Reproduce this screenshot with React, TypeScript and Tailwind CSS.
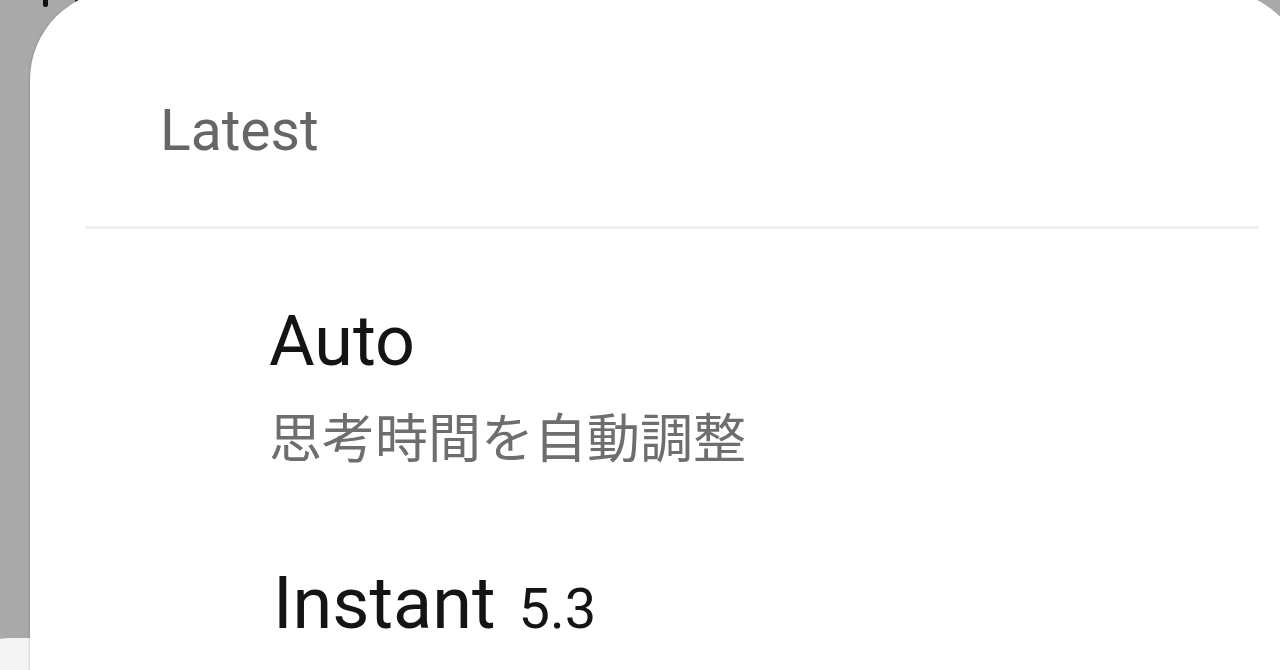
export default function App() {
  return (
    <div
      className="relative h-[670px] w-[1280px] overflow-hidden bg-[#a9a9a9]"
      style={{ fontFamily: "Roboto, 'Noto Sans CJK JP', sans-serif" }}
    >
      {/* bits of the page behind the sheet */}
      <div className="absolute left-[43px] top-[-6px] h-[13px] w-[5px] rounded-b-[2px] bg-[#111]" />
      <div className="absolute left-[75px] top-[-6px] h-[9px] w-[5px] rounded-b-[3px] bg-[#222]" />
      <div className="absolute left-[-60px] top-[638px] h-[120px] w-[120px] rounded-tl-[70px] bg-[#f4f4f4]" />

      <div className="relative -mt-[10px] ml-[30px] flex h-[720px] w-[1276px] flex-col rounded-t-[90px] bg-white shadow-[-1px_0_2px_rgba(0,0,0,0.12)]">
        <div className="pl-[130px] pt-[112px] text-[57px] leading-none text-[#666]">Latest</div>
        <div className="ml-[55px] mt-[67px] h-[3px] w-[1174px] bg-[#efefef]" />

        <div className="flex flex-col pl-[239px]">
          <div className="mt-[77px] text-[70px] leading-none text-[#141414]">Auto</div>
          <div className="mt-[38px] text-[53px] leading-none text-[#6e6e6e]">思考時間を自動調整</div>
          <div className="ml-[4px] mt-[101px] flex items-baseline text-[72px] leading-none text-[#141414]">
            <span>Instant</span>
            <span className="ml-[23px] text-[56px]">5.3</span>
          </div>
        </div>
      </div>
    </div>
  )
}
